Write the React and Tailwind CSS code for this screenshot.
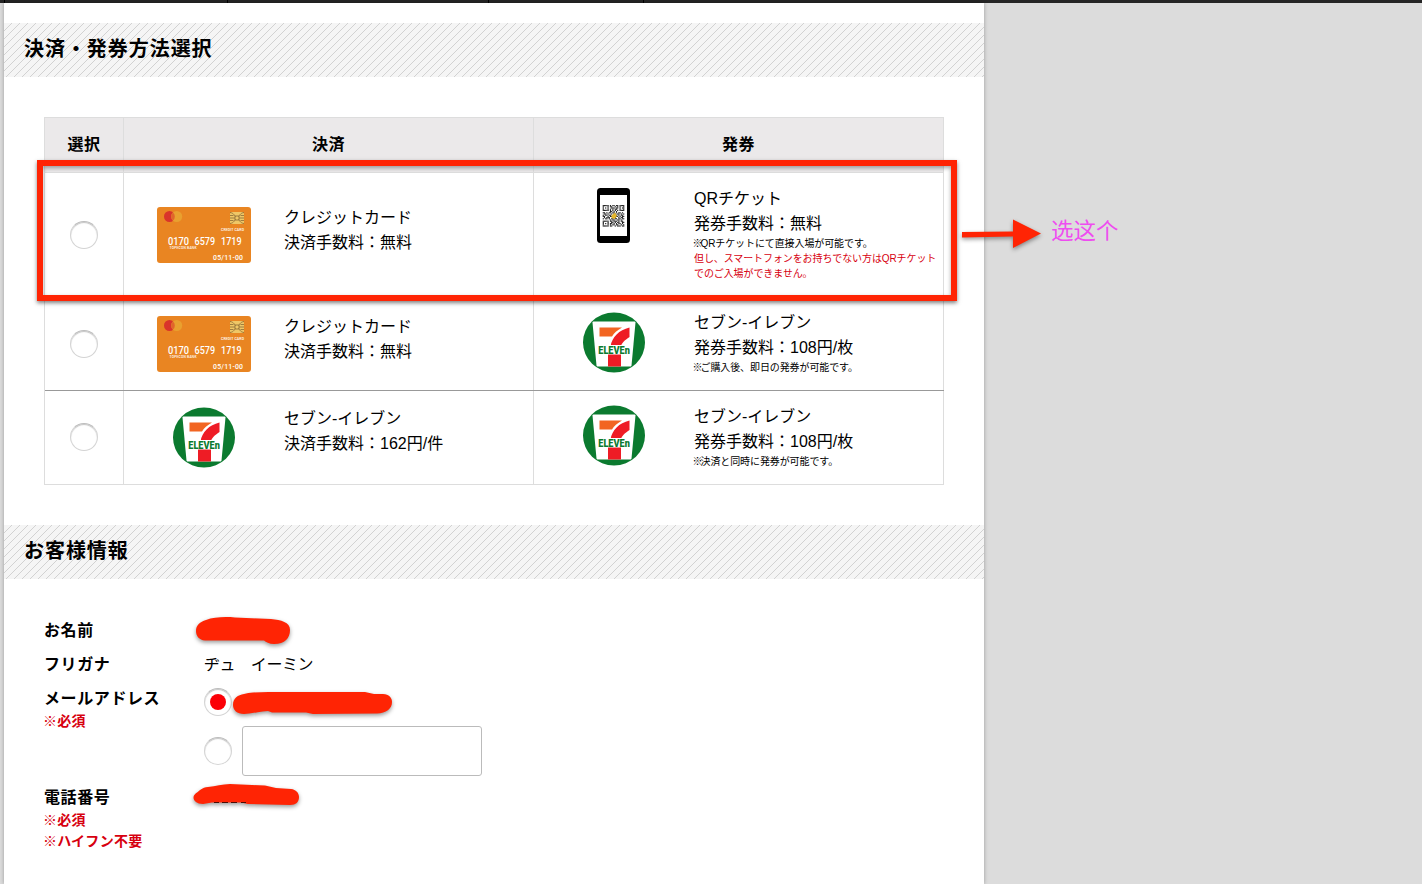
import React from "react";

const JP = "font-['Liberation_Sans','Noto_Sans_CJK_JP',sans-serif]";

function SectionHeading({ children }) {
  return (
    <h2 className="flex h-[54px] items-center bg-[#f5f5f5] bg-[repeating-linear-gradient(135deg,transparent_0px,transparent_4.95px,#d2d2d2_4.95px,#d2d2d2_5.657px)] px-5 pb-[3px] text-[20px] font-bold tracking-[0.95px] text-black">
      {children}
    </h2>
  );
}

function Radio({ checked }) {
  return (
    <span className="flex size-7 shrink-0 items-center justify-center rounded-full border border-[#d4d4d4] border-t-[#bdbdbd] bg-white shadow-[inset_0_1px_1px_#c4c4c4]">
      {checked && <span className="size-4 rounded-full bg-[#fb0007]" />}
    </span>
  );
}

function CreditCard() {
  return (
    <svg width="94" height="56" viewBox="0 0 94 56" fontFamily="Roboto, sans-serif" fill="#fff">
      <rect width="94" height="56" rx="3" fill="#e98522" />
      <circle cx="12.5" cy="9.5" r="5.5" fill="#d9342b" />
      <circle cx="19.7" cy="9.5" r="5.5" fill="#e9a02f" />
      <path d="M16 5.4a5.5 5.5 0 0 1 0 8.2a5.5 5.5 0 0 1 0-8.2z" fill="#e0662b" />
      <rect x="73" y="5" width="14" height="12" rx="1.5" fill="#efc766" />
      <g fill="none" stroke="#8a6a35" strokeWidth="0.8">
        <path d="M73 5.500C77 6 77.500 9 78.500 9.500M87 5.500C83 6 82.500 9 81.500 9.500M73 16.500C77 16 77.500 13 78.500 12.500M87 16.500C83 16 82.500 13 81.500 12.500M73 8.500h3.500M73 11h5M73 13.500h3.500M87 8.500h-3.500M87 11h-5M87 13.500h-3.500" />
        <rect x="78" y="9" width="4" height="4" />
      </g>
      <text x="64" y="23.800" fontSize="3.600" fontWeight="500" textLength="23">CREDIT CARD</text>
      <g fontSize="10" fontWeight="500">
        <text x="11" y="37.700" textLength="21" lengthAdjust="spacingAndGlyphs">0170</text>
        <text x="37.500" y="37.700" textLength="20.500" lengthAdjust="spacingAndGlyphs">6579</text>
        <text x="64" y="37.700" textLength="20.500" lengthAdjust="spacingAndGlyphs">1719</text>
      </g>
      <text x="12.500" y="42.300" fontSize="3.300" fontWeight="500" textLength="27">TOPECON BANK</text>
      <text x="56" y="52.600" fontSize="6.900" fontWeight="500" textLength="30">05/11-00</text>
    </svg>
  );
}

function SevenEleven() {
  return (
    <svg width="62" height="61" viewBox="0 0 62 61">
      <ellipse cx="31" cy="30.500" rx="31" ry="30" fill="#0b7a2f" />
      <path d="M9.500 10.500Q9.500 9.500 10.500 9.500H51.500Q52.500 9.500 52.500 10.500L48.500 53.500Q48.400 54.500 47.500 54.500H14.500Q13.600 54.500 13.500 53.500z" fill="#fff" />
      <path d="M16.500 15.500H39C34 18.500 31 21 29 24.500H16.500z" fill="#f26522" />
      <path d="M46.500 15.500V25C41.500 28.500 38.500 31 38 34.500H27.500C29 25 36 18 46.500 15.500z" fill="#ee1c25" />
      <rect x="25" y="42" width="13" height="12.500" fill="#ee1c25" />
      <rect x="13" y="33" width="36" height="9.500" fill="#fff" />
      <text x="15.300" y="41.600" fontFamily="Roboto, sans-serif" fontSize="10.200" fontWeight="900" fill="#0b7a2f" textLength="31.500" lengthAdjust="spacingAndGlyphs">
        ELEVEn
      </text>
    </svg>
  );
}

const QR_ROWS = [
  "111110101101101111",
  "100010110010101001",
  "101010011101101011",
  "100010101011001001",
  "111110101010101111",
  "000000110101000000",
  "110101101101011010",
  "011010010110110101",
  "101101100011010110",
  "110010110101101011",
  "010111001110010110",
  "101101011011011011",
  "000000101100110100",
  "111110110111010110",
  "100010011010110011",
  "101010110101011010",
  "100010101101100101",
  "111110110010111011",
];

function QrPhone() {
  return (
    <svg width="33" height="55" viewBox="0 0 33 55" className="-ml-px">
      <rect width="33" height="55" rx="3.500" fill="#000" />
      <rect x="3" y="7" width="27" height="41" fill="#fff" />
      {QR_ROWS.map((row, y) =>
        row.split("").map((v, x) =>
          v === "1" ? <rect key={`${x}-${y}`} x={5.7 + x * 1.2} y={17 + y * 1.2} width="1.2" height="1.2" fill="#222" /> : null
        )
      )}
      <path d="M14.500 27.500L18 24.500L20 28L17.500 31L14.500 30z" fill="#e5b62c" />
    </svg>
  );
}

function Option({ icon, pad, iconPad, lines, children }) {
  return (
    <div className="flex border-r border-[#dddddd]">
      <div className={`flex w-[160px] shrink-0 justify-center ${iconPad}`}>{icon}</div>
      <div className={`text-[16px] leading-[24.5px] whitespace-nowrap text-black ${pad}`}>
        {lines.map((l) => (
          <p key={l}>{l}</p>
        ))}
        {children}
      </div>
    </div>
  );
}

function Note({ children, red }) {
  return <p className={`text-[10px] leading-[15px] tracking-[-0.1px] ${red ? "text-[#d7000f]" : "text-black"}`}>{children}</p>;
}

function NoteMark() {
  return <span className="inline-block w-[6.5px] -indent-[1.6px]">※</span>;
}

function RadioCell() {
  return (
    <div className="flex items-center justify-center border-r border-[#dddddd] pb-px">
      <Radio />
    </div>
  );
}

const COLS = "grid grid-cols-[79px_410px_410px]";

function PaymentTable() {
  return (
    <div className="mx-10 mt-10 w-[900px] border border-r-0 border-[#dddddd]">
      <div className={`${COLS} h-[55px] border-b border-[#dddddd] bg-[#ebe9ea] text-[16px] font-bold tracking-[0.6px] text-black`}>
        {["選択", "決済", "発券"].map((t) => (
          <div key={t} className="flex items-center justify-center border-r border-[#dddddd]">{t}</div>
        ))}
      </div>
      <div className={`${COLS} h-[125px] border-b border-[#999999]`}>
        <RadioCell />
        <Option icon={<CreditCard />} iconPad="pt-[34px]" pad="pt-[33px]" lines={["クレジットカード", "決済手数料：無料"]} />
        <Option icon={<QrPhone />} iconPad="pt-[15px]" pad="pt-[14px]" lines={["QRチケット", "発券手数料：無料"]}>
          <Note><NoteMark />QRチケットにて直接入場が可能です。</Note>
          <Note red>但し、スマートフォンをお持ちでない方はQRチケット</Note>
          <Note red>でのご入場ができません。</Note>
        </Option>
      </div>
      <div className={`${COLS} h-[93px] border-b border-[#999999]`}>
        <RadioCell />
        <Option icon={<CreditCard />} iconPad="pt-[18px]" pad="pt-[17px]" lines={["クレジットカード", "決済手数料：無料"]} />
        <Option icon={<SevenEleven />} iconPad="pt-[14px]" pad="pt-[13px]" lines={["セブン-イレブン", "発券手数料：108円/枚"]}>
          <Note><NoteMark />ご購入後、即日の発券が可能です。</Note>
        </Option>
      </div>
      <div className={`${COLS} h-[93px]`}>
        <RadioCell />
        <Option icon={<SevenEleven />} iconPad="pt-[16px]" pad="pt-[16px]" lines={["セブン-イレブン", "決済手数料：162円/件"]} />
        <Option icon={<SevenEleven />} iconPad="pt-[14px]" pad="pt-[14px]" lines={["セブン-イレブン", "発券手数料：108円/枚"]}>
          <Note><NoteMark />決済と同時に発券が可能です。</Note>
        </Option>
      </div>
    </div>
  );
}

function Label({ children, notes = [] }) {
  return (
    <div className="w-[160px] shrink-0 text-[16px] leading-6 font-bold tracking-[0.6px] text-black">
      <p>{children}</p>
      {notes.map((n) => (
        <p key={n} className="-ml-px text-[14px] leading-[21px] tracking-[0.2px] text-[#d7000f]">{n}</p>
      ))}
    </div>
  );
}

function CustomerForm() {
  return (
    <div className="flex flex-col px-10 pt-10">
      <div className="flex h-[34px]">
        <Label>お名前</Label>
      </div>
      <div className="flex h-[34px]">
        <Label>フリガナ</Label>
        <p className="text-[16px] leading-6 tracking-[-0.4px] text-black">ヂュ　イーミン</p>
      </div>
      <div className="flex h-[99px]">
        <Label notes={["※必須"]}>メールアドレス</Label>
        <div className="flex flex-col">
          <div className="mt-px flex h-7">
            <Radio checked />
          </div>
          <div className="mt-[10px] flex items-center gap-[10px]">
            <Radio />
            <input type="text" className="h-[50px] w-[240px] rounded-[3px] border border-[#bbbbbb] bg-white" />
          </div>
        </div>
      </div>
      <div className="flex">
        <Label notes={["※必須", "※ハイフン不要"]}>電話番号</Label>
      </div>
    </div>
  );
}

function Annotations() {
  return (
    <>
      <div className="pointer-events-none absolute top-[160px] left-[37px] h-[141px] w-[920px] border-[6px] border-[#ff2404] shadow-[0_2px_4px_rgba(0,0,0,0.5),inset_0_2px_4px_rgba(0,0,0,0.35)]" />
      <svg className="pointer-events-none absolute inset-0 drop-shadow-[0_2px_2px_rgba(0,0,0,0.4)]" width="1422" height="884" viewBox="0 0 1422 884" fill="#ff2404">
        <path d="M962 232L1013 231.500V219.500L1041 233.500L1013 248V236.500L962 237.500z" />
        <path d="M206 620C214 617 225 616.500 235 617.500L271 619C281 620 290 622 290 630C290 638 285 644 274 644C269 644 266 642 264 640.500H205C199 640 196 636 196 631C196 625 200 622 206 620z" />
        <path d="M244 694C253 692 265 692 276 692H365L374 694H383C389 694 392 698 392 702C392 709 386 713 377 713.500L313 714L306 712.500H272L268 711C260 711 253 714 244 714C237 714 233 710 233 705C233 698 238 695 244 694z" />
        <path d="M208 787C216 786.500 222 784 230 784L265 785.500L276 788L291 789C296 789.500 299 793 299 797C299 802 296 805 290 805L248 804L241 802.500H212L203 804C197 804 193.500 801 193.500 797.500C193.500 794 197 793 200 790C203 788 205 787 208 787z" />
        <path d="M214 802.500h5M222 802.500h6M231 802.500h6M241 802.500h5" stroke="#4a0d05" strokeWidth="1" fill="none" />
      </svg>
      <p className="absolute top-[212px] left-[1051px] font-['Noto_Sans_CJK_SC',sans-serif] text-[22.5px] leading-[34px] whitespace-nowrap text-[#ee4df0]">选这个</p>
    </>
  );
}

export default function App() {
  return (
    <div className={`relative h-[884px] w-[1422px] overflow-hidden bg-[#dcdcdc] ${JP}`}>
      <div className="flex h-[3px] bg-[#252525] pl-1">
        <div className="w-[224px] border-x border-black" />
        <div className="w-[261px] border-r border-black" />
        <div className="w-[155px] border-r border-black" />
      </div>
      <main className="ml-1 h-[881px] w-[980px] bg-white pt-5 shadow-[0_0_4px_rgba(0,0,0,0.3)]">
        <SectionHeading>決済・発券方法選択</SectionHeading>
        <PaymentTable />
        <div className="mt-10">
          <SectionHeading>お客様情報</SectionHeading>
        </div>
        <CustomerForm />
      </main>
      <Annotations />
    </div>
  );
}
